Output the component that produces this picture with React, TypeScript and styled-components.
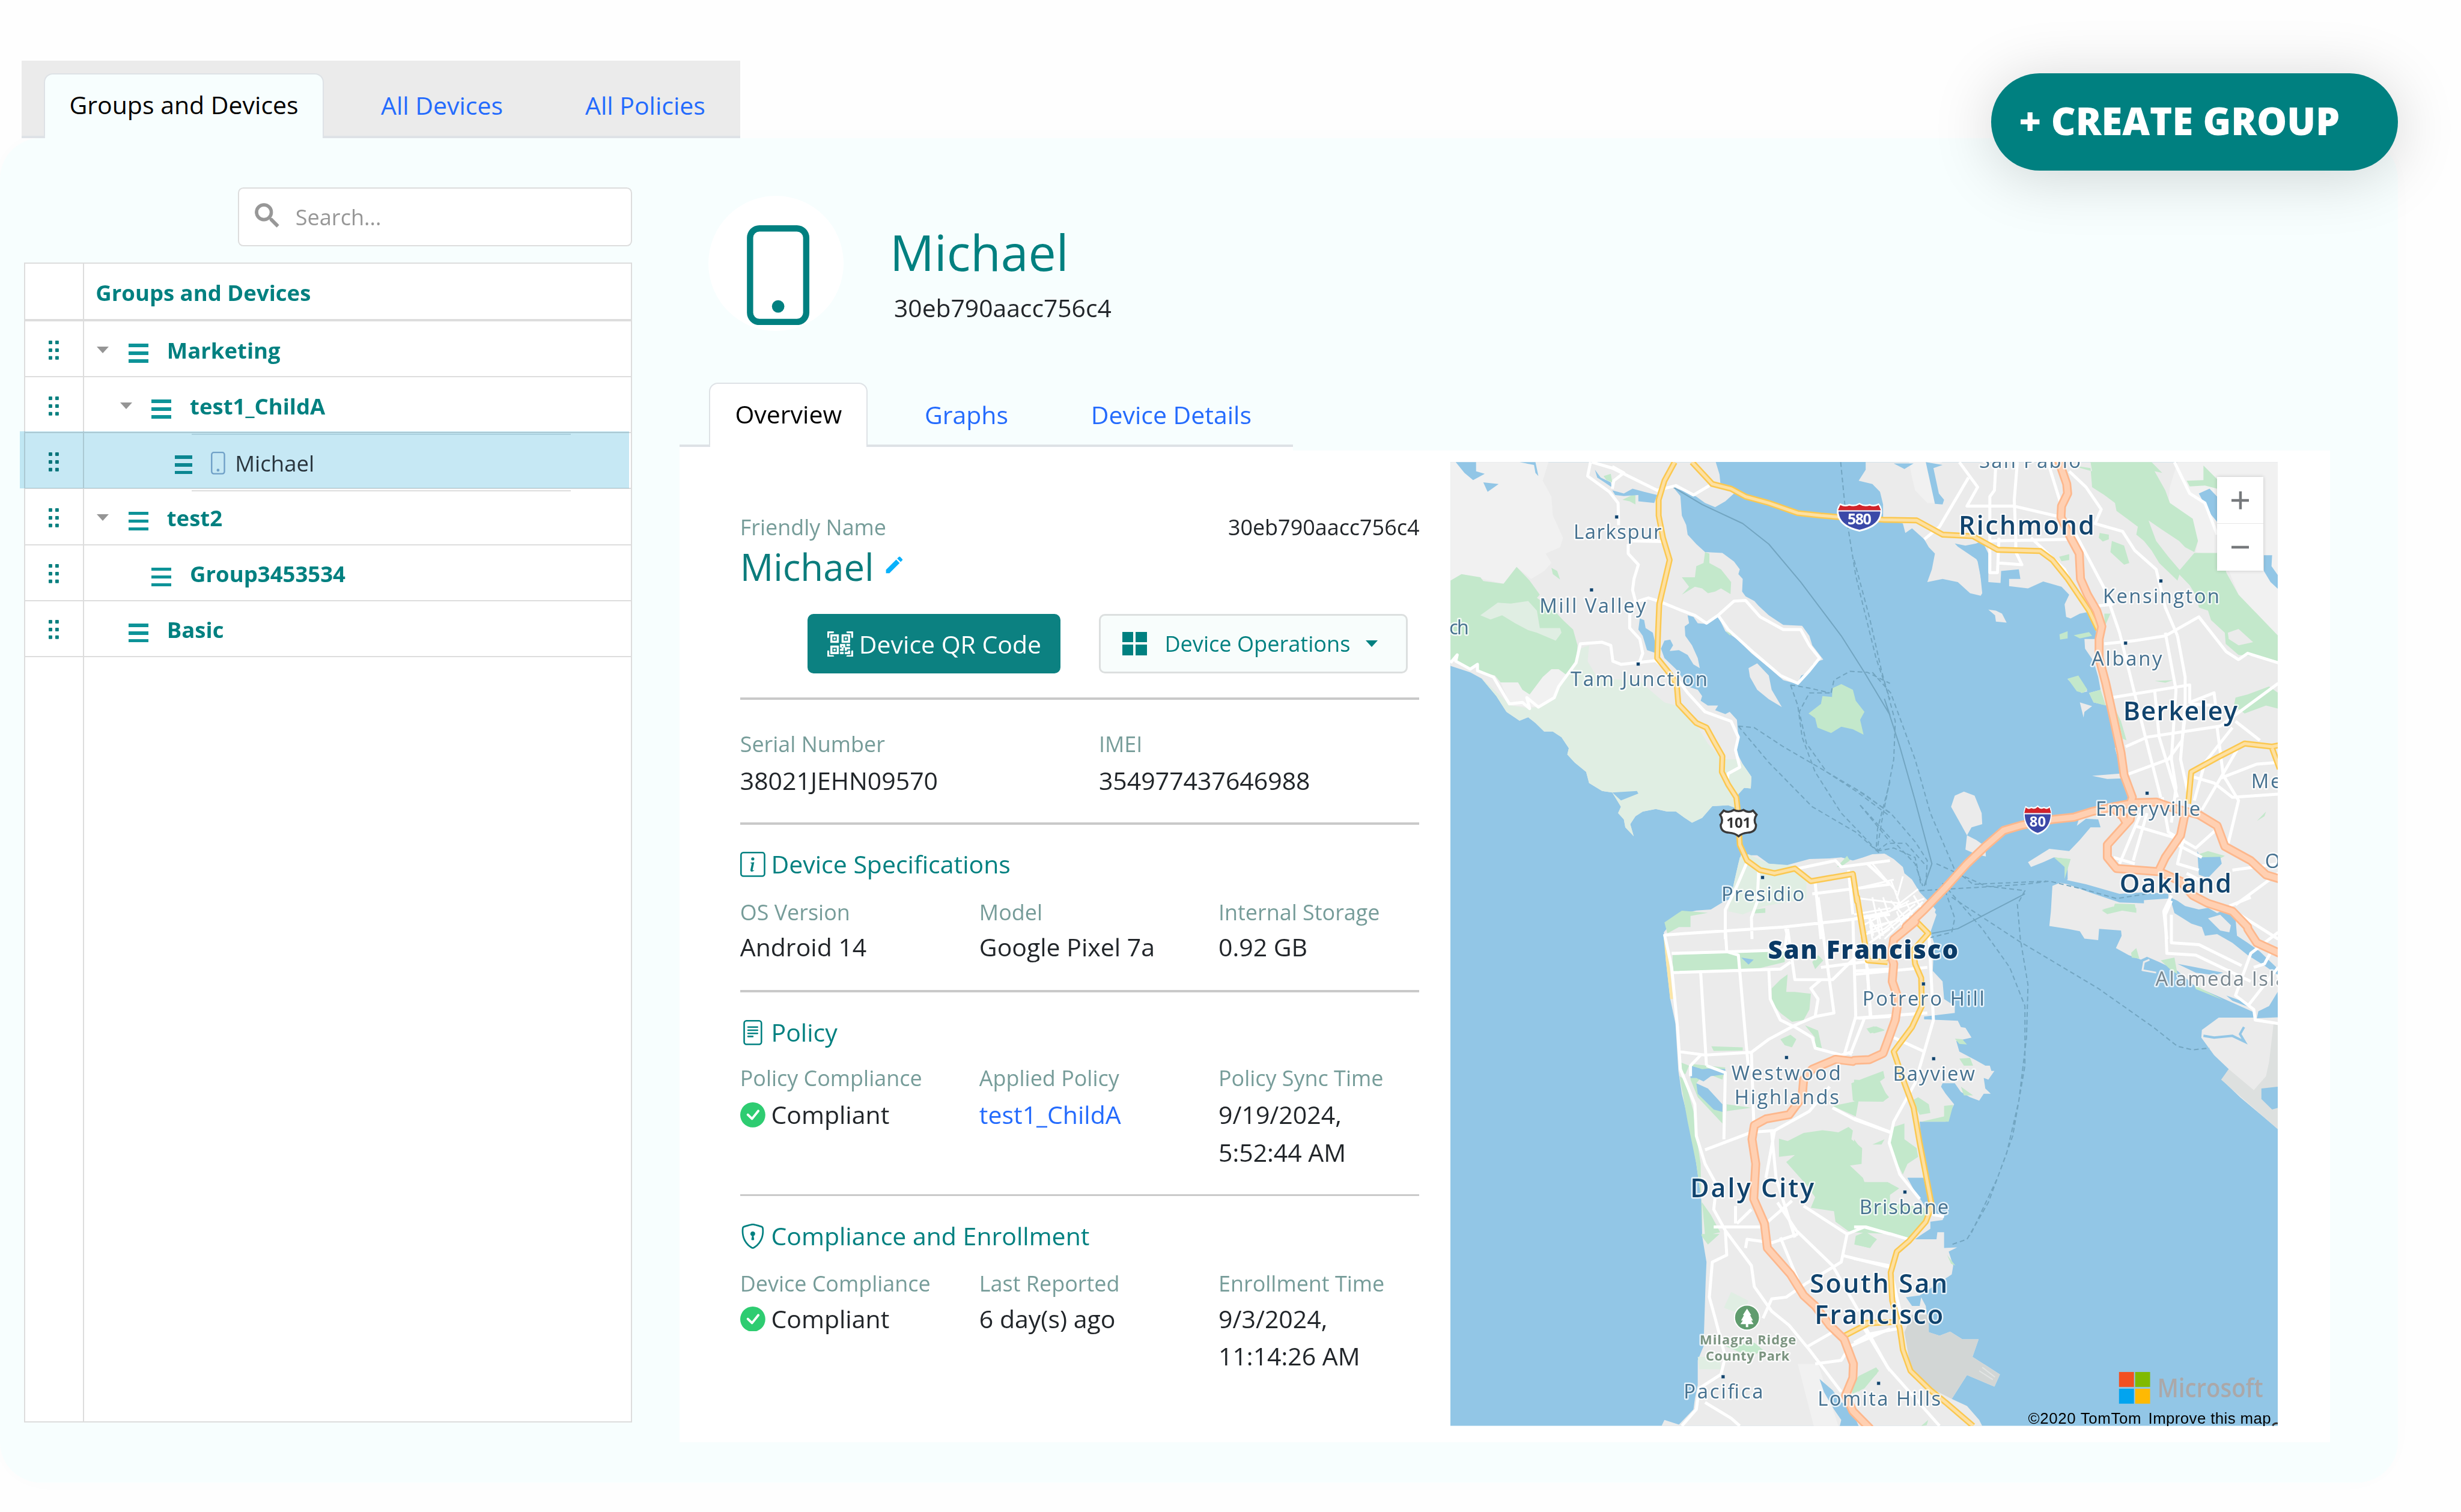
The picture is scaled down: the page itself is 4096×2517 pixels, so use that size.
import React from "react";
import styled, { createGlobalStyle, css } from "styled-components";
import {
  BsPhone,
  BsInfoSquare,
  BsFileText,
  BsShieldLock,
  BsCheckCircleFill,
  BsQrCodeScan,
} from "react-icons/bs";
import { MdSearch, MdEdit } from "react-icons/md";

const teal = "#008080";
const tint = "#f7fefe";
const line = "#dddddd";
const blue = "#246bfd";

const Global = createGlobalStyle`
  html, body { margin: 0; padding: 0; background: #fff; overflow: hidden; }
  * { box-sizing: border-box; }
`;

const Screen = styled.div`
  position: relative;
  width: 4115px;
  height: 2529px;
  zoom: 0.99535;
  overflow: hidden;
  padding-top: 101px;
  background: #fefefe;
  font-family: "Open Sans", "Noto Sans", sans-serif;
  font-size: 41.2px;
  color: #212529;
  white-space: nowrap;
`;

/* ---------- top tabs ---------- */

const TopTabs = styled.nav`
  position: relative;
  z-index: 1;
  display: flex;
  align-items: flex-end;
  width: 1202px;
  height: 130px;
  margin-left: 36px;
  padding-left: 37px;
  background: #ebebeb;
  box-shadow: inset 0 -4px 0 #dee2e6;
`;

const Tab = styled.a<{ $width: number; $height: number; $active?: boolean; $fill?: string }>`
  display: flex;
  justify-content: center;
  width: ${(p) => p.$width}px;
  height: ${(p) => p.$height}px;
  line-height: 102px;
  color: ${(p) => (p.$active ? "#000" : blue)};
  ${(p) =>
    p.$active &&
    css`
      background: ${p.$fill};
      border: 3px solid #dee2e6;
      border-bottom: 0;
      border-radius: 15px 15px 0 0;
    `}
`;

const CreateButton = styled.button`
  position: absolute;
  z-index: 2;
  left: 3329px;
  top: 123px;
  width: 681px;
  height: 162px;
  padding: 0 0 6px 47px;
  border: 0;
  border-radius: 81px;
  background: ${teal};
  color: #fff;
  font: 800 63.5px "Open Sans", sans-serif;
  text-align: left;
  white-space: nowrap;
  box-shadow: 0 10px 100px rgba(0, 0, 0, 0.17);
`;

const Panel = styled.main`
  display: flex;
  width: 4010px;
  height: 2249px;
  border-radius: 68px;
  background: ${tint};
  box-shadow: 0 0 60px rgba(0, 0, 0, 0.012);
`;

/* ---------- group tree ---------- */

const Sidebar = styled.aside`
  width: 1057px;
  padding: 82px 0 0 40px;
  display: flex;
  flex-direction: column;
`;

const SearchBox = styled.label`
  display: flex;
  align-items: center;
  align-self: flex-end;
  width: 659px;
  height: 99px;
  padding-left: 20px;
  gap: 20px;
  border: 3px solid ${line};
  border-radius: 9px;
  background: #fff;
  color: #979797;
  font-size: 36.3px;
  svg {
    margin-top: -3px;
  }
  svg path:last-child {
    stroke: #979797;
    stroke-width: 0.5px;
  }
`;

const SearchText = styled.span`
  padding-top: 1px;
`;

const Grid = styled.section`
  position: relative;
  display: flex;
  flex-direction: column;
  height: 1940px;
  margin-top: 27px;
  border: 3px solid ${line};
  background: #fff;
  font-size: 36.7px;
`;

const GridRow = styled.div<{ $head?: boolean; $fill?: boolean }>`
  display: flex;
  height: ${(p) => (p.$head ? 96.5 : 93.6)}px;
  border-bottom: ${(p) => (p.$head ? 5 : 3)}px solid ${line};
  ${(p) => p.$fill && "flex: 1; border-bottom: 0;"}
`;

const HandleCell = styled.div`
  display: flex;
  align-items: center;
  width: 99px;
  padding: 4px 0 0 36px;
  border-right: 3px solid ${line};
`;

const TreeCell = styled.div<{ $depth: number; $device?: boolean }>`
  display: flex;
  align-items: center;
  padding: ${(p) => (p.$device ? 8 : 4)}px 0 0 ${(p) => 19 + p.$depth * 38.5}px;
  color: ${(p) => (p.$device ? "#343a40" : teal)};
  font-weight: ${(p) => (p.$device ? 400 : 700)};
`;

const Caret = styled.i<{ $on: boolean }>`
  margin: 0 33px 0 2px;
  border: 11px solid transparent;
  border-top: 12px solid ${(p) => (p.$on ? "#959595" : "transparent")};
  border-bottom: 0;
`;

const Bars = styled.i<{ $short?: boolean }>`
  display: flex;
  flex-direction: column;
  gap: 7.5px;
  width: ${(p) => (p.$short ? 29 : 33)}px;
  margin: ${(p) => (p.$short ? 6 : 11)}px ${(p) => (p.$short ? 27 : 31)}px 0 0;
  &::before,
  &::after,
  & > b {
    content: "";
    height: 5.5px;
    background: #0d9398;
  }
`;

const PhoneMark = styled.span`
  display: flex;
  width: 47px;
  margin-left: -2px;
  color: #8fb0d0;
`;

const RowHighlight = styled.div`
  position: absolute;
  left: -9px;
  top: 280px;
  width: 1019px;
  height: 96px;
  background: #c6e8f4;
  mix-blend-mode: multiply;
`;

const DropGuide = styled.div`
  position: absolute;
  left: 278px;
  top: 284px;
  width: 634px;
  height: 97px;
  border-top: 3px solid #dde5e8;
  border-bottom: 3px solid ${line};
`;

/* ---------- device pane ---------- */

const DevicePane = styled.section`
  width: 2760px;
  margin-left: 79px;
  display: flex;
  flex-direction: column;
`;

const DeviceHeader = styled.header`
  display: flex;
  height: 409px;
  padding: 97px 0 0 49px;
`;

const Avatar = styled.div`
  display: flex;
  justify-content: center;
  width: 226px;
  height: 226px;
  padding: 49px 0 0 6px;
  border-radius: 50%;
  background: #fff;
  color: ${teal};
`;

const DeviceTitle = styled.div`
  margin-left: 77px;
  padding-top: 44px;
`;

const TitleName = styled.h1`
  margin: 0;
  font-weight: 400;
  font-size: 82.7px;
  line-height: 100px;
  color: ${teal};
`;

const TitleId = styled.div`
  margin: 13px 0 0 7px;
  font-size: 41px;
  line-height: 60px;
`;

const DeviceTabs = styled.nav`
  display: flex;
  align-items: flex-end;
  width: 1026px;
  height: 108px;
  padding-left: 50px;
  box-shadow: inset 0 -4px 0 #dee2e6;
`;

const Card = styled.div`
  display: flex;
  height: 1664px;
  background: linear-gradient(${tint}, ${tint}) 1026px 0 / 100% 6px no-repeat, #fff;
`;

const Details = styled.div`
  width: 1136px;
  margin-left: 101.5px;
  padding-top: 108px;
`;

const Line = styled.div<{ $gap?: number }>`
  display: flex;
  justify-content: space-between;
  margin-top: ${(p) => p.$gap || 0}px;
`;

const Columns = styled.div<{ $gap?: number; $cols: number }>`
  display: grid;
  grid-template-columns: ${(p) => (p.$cols === 2 ? "600px 1fr" : "400px 400px 1fr")};
  margin-top: ${(p) => p.$gap || 0}px;
`;

const Label = styled.div`
  font-size: 36.1px;
  line-height: 52px;
  color: #769c99;
`;

const SmallId = styled.div`
  font-size: 36.1px;
  line-height: 52px;
`;

const Value = styled.div<{ $link?: boolean }>`
  display: flex;
  gap: 10px;
  line-height: 63px;
  white-space: pre;
  color: ${(p) => (p.$link ? blue : "inherit")};
  svg {
    margin-top: 11px;
  }
`;

const FriendlyName = styled.div`
  display: flex;
  gap: 15px;
  margin-top: 2px;
  font-size: 62px;
  line-height: 76px;
  color: #0b7c7c;
  svg {
    margin-top: 16px;
  }
`;

const Buttons = styled.div`
  display: flex;
  gap: 64px;
  margin: 41px 0 41px 113px;
`;

const QrButton = styled.button`
  display: flex;
  align-items: center;
  gap: 10px;
  width: 423px;
  height: 99px;
  padding: 1px 0 0 33px;
  border: 0;
  border-radius: 10px;
  background: #0c8181;
  color: #fff;
  font: 400 41.2px "Open Sans", sans-serif;
  white-space: nowrap;
  svg {
    stroke: #fff;
    stroke-width: 0.3px;
  }
`;

const OpsButton = styled.button`
  display: flex;
  align-items: center;
  width: 516px;
  height: 99px;
  padding: 0 0 0 36px;
  border: 4px solid #dcdfdf;
  border-radius: 10px;
  background: #f8fdfc;
  color: ${teal};
  font: 400 36.3px "Open Sans", sans-serif;
  white-space: nowrap;
`;

const Tiles = styled.span`
  display: grid;
  grid-template-columns: 18.5px 18.5px;
  gap: 4px;
  margin-right: 30px;
  i {
    height: 17.5px;
    background: ${teal};
  }
`;

const OpsCaret = styled.i`
  margin: 0 0 0 26px;
  border: 10.5px solid transparent;
  border-top: 12px solid ${teal};
  border-bottom: 0;
`;

const Rule = styled.hr`
  height: 4px;
  margin: 0;
  border: 0;
  background: #c9c9c9;
`;

const SectionHead = styled.h2<{ $gap: number }>`
  display: flex;
  gap: 10px;
  margin: ${(p) => p.$gap}px 0 0;
  font-weight: 400;
  font-size: 41.2px;
  line-height: 63px;
  color: ${teal};
  svg {
    margin-top: 11px;
  }
`;

const Space = styled.div<{ $h: number }>`
  height: ${(p) => p.$h}px;
`;

/* ---------- map ---------- */

const MapBox = styled.div`
  position: relative;
  width: 1384px;
  height: 1612px;
  margin: 25px 0 0 51.5px;
  svg {
    display: block;
  }
`;

const ZoomBox = styled.div`
  position: absolute;
  left: 1282px;
  top: 25px;
  width: 78px;
  height: 156px;
  display: flex;
  flex-direction: column;
  background: #fff;
  box-shadow: 0 0 6px rgba(0, 0, 0, 0.18);
`;

const ZoomButton = styled.button`
  display: flex;
  align-items: center;
  justify-content: center;
  flex: 1;
  padding: 0;
  border: 0;
  background: none;
  & + & {
    border-top: 2px solid #e8e8e8;
  }
`;

/* Map geometry is stored per tile; each tile has its own origin and unit size. */
const tiles: Record<string, number[]> = {
  NW: [2400, 740, 0.48469, 0.52934],
  NE: [3100, 740, 0.5102, 0.52934],
  SW: [2400, 1500, 0.48469, 0.58673],
  SE: [3100, 1500, 0.5102, 0.58673],
};

const trace = (s: string) => {
  let t = tiles.NW;
  let d = "";
  let cmd = "M";
  for (const tok of s.trim().split(/\s+/)) {
    if (tiles[tok]) t = tiles[tok];
    else if (tok === "/") cmd = "M";
    else {
      const [x, y] = tok.split(",").map(Number);
      d += cmd + (t[0] + x * t[2]).toFixed(1) + " " + (t[1] + y * t[3]).toFixed(1);
      cmd = "L";
    }
  }
  return d;
};

const land = [
  `NW 52,61 967,61 980,100 983,128 1030,160 1000,185 965,203 930,190 900,170 870,158 820,140 845,168 850,230 865,260 870,290 900,320 930,345 990,348 1030,375 1050,400 1045,415 1060,430 1058,470 1070,485 1100,500 1115,515 1150,545 1200,575 1265,578 1290,610 1300,640 1338,685 1320,690 1300,700 1290,725 1262,735 1248,762 1200,750 1150,710 1090,665 1040,620 1000,595 975,548 930,572 905,570 890,550 870,545 875,570 860,580 862,610 885,640 905,680 912,712 890,700 870,670 840,655 808,658 820,640 810,622 790,625 778,650 790,680 830,715 850,740 870,770 905,780 920,800 915,815 940,830 975,830 965,845 1000,857 1015,850 1040,875 1045,930 1035,970 1060,1015 1090,1055 1088,1092 1065,1090 1045,1110 1040,1155 1010,1145 955,1148 920,1185 885,1200 860,1185 830,1165 800,1165 760,1157 715,1165 690,1180 672,1205 684,1243 655,1215 650,1190 630,1170 640,1150 610,1105 575,1100 530,1075 520,1040 480,1010 455,985 460,965 435,930 405,912 375,912 345,885 320,867 290,878 245,850 210,800 160,745 120,725 52,705`,
  `NW 1110,697 1150,735 1160,780 1195,835 1150,810 1110,780 1085,740 1080,712`,
  `NE 38,61 38,85 15,120 60,130 85,155 95,195 95,240 160,255 168,285 190,270 230,305 245,330 265,350 255,400 240,440 290,430 340,440 380,475 415,483 420,475 412,400 405,370 340,328 330,318 365,325 400,318 420,310 440,350 440,440 480,443 482,405 540,400 545,430 508,430 508,453 570,460 620,438 680,455 705,480 690,510 695,550 710,555 740,540 765,535 790,560 795,620 755,620 757,650 785,690 800,740 808,780 770,790 785,820 830,830 850,900 865,950 855,965 865,1000 872,1045 780,1052 830,1062 878,1060 890,1100 900,1130 830,1140 790,1150 740,1180 730,1210 760,1188 800,1190 808,1215 775,1215 740,1255 705,1290 640,1283 570,1325 580,1340 620,1325 655,1310 700,1315 700,1380 650,1400 645,1480 SE 640,82 700,90 740,97 755,118 800,122 803,90 875,95 877,110 858,145 900,165 940,178 960,170 1000,185 1060,210 1120,255 1200,285 1290,320 1315,330 1310,343 1195,343 1140,378 1138,400 1180,450 1228,490 1205,520 1265,570 1340,625 1390,662 NE 1390,61`,
  `NE 330,1115 360,1102 395,1115 418,1170 420,1205 385,1215 370,1240 400,1255 430,1275 432,1307 400,1300 365,1285 370,1240 318,1150`,
  `NE 440,527 465,530 485,540 500,568 465,565 462,545 / 698,745 760,780 765,785 745,790 / 740,820 780,832 755,850 752,868`,
  `NW 1055,1300 1080,1303 1110,1303 1150,1330 1210,1335 1290,1315 1360,1313 1400,1310 1440,1320 1500,1303 1560,1300 NE 30,1310 60,1300 100,1298 130,1315 160,1340 165,1360 190,1380 215,1420 250,1455 268,1475 255,1510 SE 255,30 270,50 250,100 262,130 258,210 290,240 295,290 330,310 330,330 230,340 230,348 340,352 350,370 365,372 385,400 335,410 345,440 400,465 430,480 445,480 450,495 460,495 440,520 425,515 430,545 448,560 425,560 410,580 380,570 350,555 330,530 290,530 285,540 300,560 328,590 300,640 215,640 220,700 240,800 175,800 200,840 255,905 295,910 290,920 250,925 250,945 215,965 200,975 270,975 273,955 295,955 295,1000 338,998 310,1010 325,1050 320,1075 250,1115 215,1135 170,1140 190,1165 215,1165 220,1140 235,1165 245,1240 280,1250 315,1238 355,1260 408,1260 388,1310 478,1360 460,1395 370,1362 320,1430 370,1450 410,1490 420,1507 SW 780,1507 790,1490 840,1503 890,1460 895,1430 905,1390 905,1320 925,1280 932,1100 935,1040 920,965 920,880 900,760 880,660 850,560 838,495 828,360 810,290 795,180 788,100 835,50 900,38 950,35 990,15 NW 1020,1440 1030,1390 1045,1330`,
];

const lightLand = [
  `NW 52,61 390,61 370,120 400,170 405,230 440,300 430,330 380,350 400,380 375,405 330,430 280,392 235,445 90,415 52,435`,
  `NW 225,757 285,757 325,795 370,740 400,715 425,715 455,730 440,745 410,805 355,835 260,830`,
  `NE 180,61 290,61 240,80 270,190 240,190 200,150 190,110`,
  `NE 1060,61 1390,61 1390,620 1330,560 1260,480 1210,360 1120,345 1127,310 1100,235 1030,190 1035,140`,
  `SW 1250,1330 1320,1330 1390,1507 1305,1507`,
];

const paleGreen = [
  `NW 155,740 225,800 260,830 320,838 355,835 410,805 450,740 490,690 500,650 530,640 525,690 560,745 700,750 790,820 830,830 900,890 940,950 990,1000 1040,1000 1060,1015 1090,1055 1088,1092 1065,1090 1045,1110 1040,1155 1010,1145 955,1148 920,1185 885,1200 860,1185 830,1165 800,1165 760,1157 715,1165 690,1180 672,1205 684,1243 655,1215 650,1190 630,1170 640,1150 610,1105 575,1100 530,1075 520,1040 480,1010 455,985 460,965 435,930 405,912 375,912 345,885 320,867 290,878 245,850 210,800`,
  `NW 1050,1310 1080,1300 1150,1330 1230,1335 1280,1360 1280,1440 1130,1465 1060,1490 1010,1480 1030,1390`,
  `SW 1020,1125 1080,1150 1060,1190 995,1170 / 905,1310 980,1310 985,1345 910,1345`,
];

const green = [
  `NW 52,435 90,415 155,425 165,437 235,445 280,392 325,435 360,480 350,490 400,520 440,560 475,590 490,640 485,700 455,735 425,715 400,715 370,740 325,795 300,780 285,757 225,757 205,735 150,725 145,700 120,715 75,690 52,685`,
  `NW 850,425 895,425 900,390 925,380 930,345 945,350 945,380 985,400 1020,440 1018,478 985,460 965,470 940,475 920,460 895,455 850,480 875,455`,
  `NW 1287,855 1330,825 1335,800 1368,803 1370,775 1400,762 1440,780 1450,815 1480,850 1465,875 1477,922 1440,905 1400,897 1365,917 1318,900 1310,870`,
  `NW 400,395 420,405 430,432 405,415 / 645,180 690,160 690,195 670,185 / 580,105 605,98 610,125 590,118 / 1000,595 1030,605 1015,608`,
  `NW 790,1515 850,1478 940,1485 880,1495 880,1530 840,1530 800,1550`,
  `NW 1385,1340 1420,1305 1430,1320 1400,1338 / 1100,1475 1138,1470 1138,1485 1100,1487`,
  `NE 705,70 780,90 775,61 975,61 1010,95 985,90 1020,150 1035,190 1110,240 1127,310 1115,345 1085,330 1065,310 1010,275 965,245 990,310 1030,360 1070,405 1060,435 1000,380 975,340 950,310 925,290 930,265 895,240 860,215 855,190 820,165 780,140 775,80`,
  `NE 1115,348 1205,348 1220,410 1260,480 1320,540 1390,610 1390,690 1330,675 1260,670 1218,635 1215,600 1170,560 1160,530 1130,520 1125,490 1100,450 1060,410`,
  `NE 1090,120 1145,118 1145,72 1190,115 1190,145 1150,135 1100,138 / 805,285 835,290 835,305 815,312 802,300 / 845,310 885,325 902,380 885,385 840,345 / 672,360 705,352 705,370 680,374`,
  `NE 1245,830 1250,805 1290,795 1360,770 1390,790 1390,840 1350,830 1280,855 / 700,745 735,735 765,780 750,790 730,785 / 770,790 808,780 825,830 785,820 / 673,605 700,595 700,618 675,622 / 720,608 770,598 780,610 740,618`,
  `NE 860,850 875,880 893,940 880,935 / 820,540 840,540 822,580 / 985,752 1045,750 1020,758 / 1320,1195 1350,1165 1345,1180 / 655,1310 710,1315 690,1378 690,1340 / 1130,1300 1160,1290 1215,1305 1170,1330 1130,1325 / 812,1475 850,1465 855,1480 / 870,1465 925,1470 925,1485 880,1478`,
  `SW 818,165 1205,152 1205,185 1120,202 818,212`,
  `SW 1160,260 1190,235 1215,220 1210,270 1240,270 1295,275 1290,320 1270,350 1230,355 1190,330 1160,300`,
  `SW 952,425 1060,428 1060,437 960,438 / 1190,405 1225,392 1245,405 1230,428 1205,422 / 1275,365 1320,380 1333,430 1305,432 1310,400 / 1300,185 1320,165 1338,180 1310,205`,
  `SW 842,510 860,520 890,610 900,680 915,760 918,960 980,960 940,990 918,965 920,880 900,760 870,640 / 920,870 950,905 982,955 930,965 / 845,470 875,480 862,505 845,495`,
  `SW 880,475 1000,485 990,520 930,500 900,530 990,590 990,645 905,570 880,520 / 1005,590 1090,600 1005,610`,
  `SW 1210,755 1240,735 1185,740 1185,688 1215,695 1270,672 1335,664 1390,670 1425,655 1440,665 1435,690 1472,715 1470,760 1430,765 1475,800 1480,812 1568,815 1568,960 1430,955 1380,925 1375,895 1295,885 1310,855 1280,820`,
  `SW 1435,530 1480,515 1545,495 1550,515 1525,530 1565,570 1545,582 1440,580 / 1370,595 1460,580 1450,625 / 1450,965 1480,955 1520,975 1500,1000 1445,990 / 1430,1400 1460,1365 1520,1340 1530,1350 1480,1400 1440,1415 / 1490,378 1520,368 1550,378 1500,388 / 1000,1280 1100,1270 1130,1290 1090,1310`,
  `SE 0,520 85,525 110,570 95,583 0,582 / 0,690 25,720 15,755 0,755 / 30,812 110,812 148,830 115,850 110,870 230,885 240,920 180,972 120,955 0,935 0,860 30,860 / 40,375 65,368 100,380 65,388 / 10,965 40,955 75,975 50,1000 5,990`,
  `SE 190,580 210,570 245,590 250,615 215,620 / 130,655 165,645 165,690 205,715 210,740 175,760 160,790 130,740 115,700 / 295,595 325,592 310,640 220,640 295,625 / 345,460 380,458 390,480 360,480 / 330,403 355,405 370,420 345,418 / 350,540 390,565 360,565 / 60,705 100,690 90,705`,
  `SE 1005,180 1050,172 1060,220 1035,205 / 908,158 925,145 935,175 910,172 / 812,38 850,30 855,18 920,20 925,40 880,38 830,48 / 1115,250 1210,293 1120,262 / 305,1020 332,1050 318,1045 / 0,1385 30,1370 75,1342 75,1358 15,1410 / 220,1507 243,1490 238,1505`,
];

const water = [
  `NW 70,61 140,61 140,90 170,98 130,118 100,95 / 165,125 218,130 180,155 / 290,61 345,61 355,105 345,95 340,70 / 550,85 570,110 605,125 608,140 575,120 558,110 / 610,150 650,160 680,145 720,155 765,165 755,190 700,185 700,165 650,168 620,165 / 610,1105 695,1100 700,1108 640,1130 / 705,555 720,560 725,585 750,600 760,640 762,665 730,655 715,610 700,590`,
  `NE 235,61 290,70 260,80 278,160 295,180 290,195 265,193 / 130,65 195,65 165,83 / 1130,160 1165,145 1190,170 1190,250 1160,215 / 1343,355 1370,355 1368,390 1390,420 1390,462 1365,440 1343,405 / 380,330 412,340 420,370 430,400 435,450 420,450 405,375`,
  `NE 1125,1290 1135,1310 1200,1308 1205,1330 1160,1375 1130,1365 / 1140,1325 1190,1340 1150,1370`,
  `SE 1035,0 1060,10 1085,25 1130,35 1160,30 1190,45 1215,35 1250,60 1255,110 1290,130 1330,155 1360,180 1390,205 1390,222 1345,195 1290,165 1240,130 1190,105 1150,110 1140,85 1105,75 1050,45 / 1060,190 1120,200 1210,215 1180,222 1120,215 / 1220,280 1300,305 1290,312 1240,295 / 1335,545 1390,540 1390,600 1370,605 1335,575 / 1325,325 1360,310 1388,270 1390,342 1320,345`,
  `NE 690,1380 760,1395 870,1425 950,1420 1030,1425 1030,1440 950,1445 950,1455 870,1452 770,1420 700,1395 650,1385`,
  `SW 1325,1373 1370,1405 1400,1440 1430,1450 1460,1507 1395,1507 1400,1490 1375,1460 1340,1410 / 880,480 920,490 950,488 1000,490 1000,505 950,510 925,525 900,515 880,515 / 900,530 940,545 990,590 990,612 960,605 905,560 / 1055,172 1098,178 1080,192`,
  `SE 175,800 230,800 255,900 235,885 / 230,340 335,335 340,350 230,348`,
];

const gray = [
  `SE 245,1190 245,1240 280,1250 315,1238 355,1260 408,1260 388,1310 478,1360 460,1395 370,1362 320,1430 230,1390 185,1340 165,1240 190,1190`,
];
const grayLight = [
  `SE 1228,490 1310,550 1350,510 1360,470 1375,360 1390,360 1390,662 1203,520`,
];

const streets = [
  `NW 535,61 525,105 600,155 630,190 632,260 / 540,61 610,80 765,150 830,135 890,165 945,135 / 610,75 650,95 615,120 610,145`,
  `NW 665,320 665,350 700,385 685,430 680,465 690,500 670,545 670,585 705,620 715,665 705,690 / 680,310 790,312 / 700,500 735,490 770,500 850,530 895,545 935,570 975,545 1030,500 1070,498 1120,550 1200,590 1260,590 1290,640 1325,680 1290,720 1250,760 1190,735 1100,665 1010,590 975,545`,
  `NW 52,695 75,670 70,690 120,715 145,700 145,720 200,740 255,825 300,820 325,840 315,805 355,835 410,805 425,770 485,695 500,635 575,630 605,640 612,690 640,700 760,688 800,720`,
  `NW 830,740 870,790 930,850 1020,880 1045,930 1035,970 1050,1025 1010,1045 1005,1075`,
  `NW 1075,1325 1040,1400 1000,1475 1000,1568 / 1115,1355 1110,1450 1090,1500 1092,1568 / 790,1555 900,1548 1200,1530 1400,1510 1568,1490 / 1310,1390 1330,1568 / 1300,1425 1568,1395 / 1250,1345 1380,1320 1400,1340 1568,1320 / 1425,1350 1440,1490 / 1490,1330 1568,1395 / 1208,1535 1218,1568`,
  `NE 345,61 405,140 370,200 525,200 / 375,110 280,265 230,305 / 465,61 460,150 445,170 445,410 470,410 475,300 / 535,61 525,180 530,300 530,345 550,385 475,380 / 525,200 680,235 / 440,310 710,305 / 580,300 690,400 710,440 / 635,61 680,200 / 705,90 760,140 810,210 790,255 880,280 920,340 990,400 1020,520 1060,610 / 700,240 820,460 870,600 960,950 1005,1120 / 800,515 850,510 / 1050,61 1100,160 1150,190 1190,290`,
  `NE 820,635 920,625 1020,610 1130,550 1220,660 1260,685 1290,665 1390,695 / 1020,600 1055,780 1040,1000 1055,1090 1040,1200 / 1060,610 1085,740 1085,830 1070,1000 1100,1130 / 845,805 1100,765 1100,820 1180,790 1185,830 1100,825 / 890,960 960,930 1200,895 1390,760 / 890,1050 1030,1000 1075,940 1090,830 / 985,780 1000,930 1060,1120 / 1190,900 1210,1050 1260,1130 1225,1270 / 1250,880 1330,940`,
  `NE 1110,1055 1180,1075 1240,1120 1390,1110 / 1240,900 1150,1010 1115,1130 / 1255,970 1140,1160 / 1390,1010 1320,1015 1200,1060 / 940,1170 870,1330 / 850,1310 920,1330 / 920,1210 1060,1250 / 960,1170 915,1320 / 1010,1120 1030,1230 1120,1280 1190,1220 / 1060,1270 1140,1310 / 1080,1250 1060,1330 1130,1350 / 1040,1430 1015,1480 1025,1568 / 1240,1350 1390,1330 / 1250,1460 1390,1360 / 1230,1470 1390,1568 / 1130,1380 1090,1360`,
  `SW 790,105 815,200 835,370 845,490 895,590 900,680 930,760 970,820 960,890 1000,950 1005,1020 955,1040 945,1140 965,1200 1000,1310 985,1360 910,1400 900,1460 850,1507 / 815,160 1040,155 1205,150 1215,90 / 815,215 1190,205 1225,185 / 1000,90 1005,155 1045,165 1070,400 1080,490 / 915,215 935,480 / 840,440 930,450 1090,442 1150,405 1240,365 1310,340 / 880,510 880,480 915,450 / 935,480 1000,500 995,690`,
  `SW 930,720 1090,670 1170,665 1290,610 1360,540 / 1090,442 1098,640 / 1150,205 1155,290 1190,350 1240,370 1300,400 1310,430 1400,450 1440,440 / 1215,90 1240,235 1370,235 1450,170 / 1320,0 1375,330 1310,340 1320,290 1295,260 1330,235 / 1330,200 1568,175 / 1440,60 1450,340 1410,450 / 1450,210 1568,205 / 1490,200 1500,340 / 1460,345 1568,340 / 1480,345 1430,450`,
  `SW 1370,600 1450,635 1568,670 / 1170,665 1140,800 / 1160,670 1175,800 1240,970 / 960,940 1120,940 / 1000,950 1090,1050 1100,1110 1160,1180 1220,1220 1290,1290 1400,1410 / 1070,1000 1075,975 1160,985 1250,960 / 1180,870 1245,950 1370,1050 1460,1180 / 1140,930 1230,865 / 1190,970 1250,1090 / 1040,930 1090,890 / 1035,880 1035,930 / 1270,880 1420,960 1400,1040 1280,1100 1210,1140 1160,1145 1130,1200 / 1400,1020 1568,1055 / 1420,960 1480,940 1568,960 / 1285,1280 1370,1240 / 1310,1330 1400,1320 1430,1280 1568,1230 / 1480,1230 1568,1350 / 930,1440 1020,1485 1050,1507`,
  `SE 0,220 240,200 / 40,180 55,340 / 245,100 260,350 200,530 130,640 115,700 150,790 215,860 / 0,345 240,330 / 130,400 230,440 / 0,630 120,670 / 0,1030 115,1050 / 120,1060 140,1140 160,1210 / 0,1270 50,1245 140,1230 / 40,1230 110,1340 280,1507 / 0,940 40,940 180,975 / 225,770 260,905 295,910`,
  `SE 1040,10 1020,50 1025,160 1120,165 1300,240 / 1040,50 1040,130 1130,135 1270,195 / 1390,100 1300,160 1250,280 1310,320 1315,350 1390,360 / 1390,200 1295,305 / 1230,25 1300,0 / 1310,200 1345,190 1370,150`,
];

const blocks = [
  `NE 20,1480 35,1568 / 50,1500 60,1568 / 75,1490 85,1568 / 0,1490 120,1470 / 130,1470 210,1410 / 60,1500 230,1440 / 50,1530 180,1500 / 100,1568 225,1450 / 140,1480 160,1530 / 170,1450 195,1500 / 195,1430 220,1470 / 20,1440 150,1455 / 120,1380 155,1470 / 0,1410 130,1380 / 60,1330 140,1420 / 160,1370 140,1440`,
  `SE 0,60 120,40 / 20,110 100,90 200,20 / 50,130 220,20 / 30,80 180,10 / 90,110 40,50 / 130,90 80,30 / 170,60 120,10 / 60,0 75,60 / 95,0 110,40`,
  `SW 1480,60 1568,50 / 1500,60 1510,110 / 1530,55 1545,110 / 1490,100 1568,70 / 1500,130 1568,90`,
];

const yellow = [
  `NW 825,61 790,120 770,180 770,230 785,300 808,370 790,440 772,510 768,600 765,680 800,720 832,760 838,825 900,885 935,900 965,950 990,990 988,1040 1010,1080 1038,1120 1043,1160 1050,1270 1075,1320 1120,1350 1170,1360 1240,1345 1295,1385 1440,1362 1455,1450 SE 10,0 35,130 45,180 110,185`,
  `NW 885,61 955,130 1020,145 1070,170 1150,190 1250,222 1330,230 1400,235 NE 95,243 205,245 290,290 390,295 470,338 610,342 650,370 700,430 770,530 800,590`,
  `SE 200,65 243,103 195,150 200,190 220,230 222,310 190,370 130,440 165,530 195,600 215,700 235,790 255,880 235,925 180,980 140,1010 120,1070 125,1150 150,1230 160,1290 185,1350 250,1405 300,1440 390,1507`,
  `NE 1095,1140 1105,1040 1190,995 1280,950 1370,960 1395,955 / 1370,965 1395,1030`,
  `SW 1400,1255 1500,1212 SE 30,1215 150,1210`,
];

const orange = [
  `NE 670,55 697,130 700,160 680,200 678,235 710,300 738,350 742,430 765,480 795,530 812,580 803,620 803,680 825,760 850,870 875,980 885,1050 912,1120 905,1140 850,1150 780,1165 720,1183 650,1190 550,1208 490,1225 430,1275 370,1330 300,1405 230,1475 170,1530 SE 200,70 130,120 122,170 130,190 125,240 145,290 135,350 110,410 95,445 50,463 0,465 SW 1440,468 1380,462 1300,490 1270,520 1265,570 1220,620 1140,632 1100,650 1092,690 1105,760 1098,860 1135,930 1145,1000 1225,1075 1270,1135 1310,1165 1360,1220 1410,1260 1442,1330 1440,1370 1415,1420 1440,1465 1500,1515`,
  `NE 915,1135 905,1190 830,1270 830,1310 860,1345 930,1350 1000,1355 1070,1385 1110,1430 1160,1455 1240,1480 1290,1530 SE 1290,90 1320,130 1395,160`,
  `NE 900,1138 990,1135 1050,1155 1130,1175 1190,1210 1215,1275 1300,1320 1350,1365 1395,1378`,
  `NE 1085,1170 1070,1240 1020,1310 1000,1350 / 850,1155 880,1180 895,1205`,
];

const ferrySolid = [
  `NW 820,140 920,195 1060,255 1150,320 1260,440 1400,610 1480,725 1568,860 NE 100,810 150,960 200,1130 255,1330 230,1400 / 255,1550 340,1535 430,1490 560,1425`,
];
const ferryDashed = [
  `NW 1398,61 1415,220 1450,420 1520,680 1568,810 / 1365,790 1375,750 1430,722 1490,725 1568,760 / 1225,765 1290,775 1360,790 / 1225,765 1250,830 1265,930 1310,1040 1400,1170 1530,1295 / 1360,790 1290,790 1255,850 1280,950 1350,1040 1450,1100 1568,1180 / 1045,895 1100,900 1200,960 1350,1040 1480,1110 1568,1170 / 1045,895 1150,1010 1300,1150 1450,1230 1530,1295 / 1465,1145 1568,1260 / 1568,1070 1525,1220 1520,1290`,
  `NE 0,370 50,550 90,720 135,880 130,1000 90,1200 75,1290 / 60,725 120,790 200,1000 250,1170 330,1350 390,1395 630,1385 / 0,1090 120,1170 200,1260 240,1320 235,1400 / 75,1290 110,1265 170,1265 230,1330 / 20,1145 120,1250 200,1330 225,1400 / 215,1415 400,1405 560,1395 640,1385 750,1410 860,1440 960,1425 / 75,1290 130,1280 200,1310 220,1400`,
  `NE 270,1330 430,1400 560,1415 540,1450 SE 535,20 545,120 570,250 565,400 540,580 500,730 440,870 370,975 320,990 / 290,-40 420,90 510,200 560,310 560,480 520,680 470,800 380,965 / 320,0 540,125 800,260 980,370 1060,425 1110,435 1165,430 / 290,-40 330,60 320,100 250,115`,
];

const Area = ({ list, fill }: { list: string[]; fill: string }) => (
  <g fill={fill}>
    {list.map((s, i) => (
      <path key={i} d={trace(s)} />
    ))}
  </g>
);

const Road = ({ list, color, width, dash }: { list: string[]; color: string; width: number; dash?: string }) => (
  <g fill="none" stroke={color} strokeWidth={width} strokeLinejoin="round" strokeDasharray={dash}>
    {list.map((s, i) => (
      <path key={i} d={trace(s)} />
    ))}
  </g>
);

type Place = [string, number, number, number, number, number, string];
const town = "#44708f";
const city = "#10436d";
const places: Place[] = [
  ["Larkspur", 2631, 901, 147, 33, 500, town],
  ["Mill Valley", 2574, 1024, 178, 33, 500, town],
  ["ch", 2423, 1060, 33, 33, 500, town],
  ["Tam Junction", 2626, 1147, 229, 33, 500, town],
  ["Presidio", 2878, 1506, 139, 33, 500, town],
  ["San Pablo", 3309, 782, 170, 33, 500, town],
  ["Richmond", 3275, 894, 227, 43, 600, city],
  ["Kensington", 3516, 1008, 195, 33, 500, town],
  ["Albany", 3497, 1113, 118, 33, 500, town],
  ["Berkeley", 3550, 1204, 191, 43, 600, city],
  ["Me", 3764, 1318, 51, 33, 500, town],
  ["Emeryville", 3504, 1364, 175, 33, 500, town],
  ["O", 3787, 1451, 28, 33, 500, town],
  ["Oakland", 3544, 1492, 187, 43, 600, city],
  ["San Francisco", 2956, 1603, 318, 42, 800, "#0a3a66"],
  ["Potrero Hill", 3114, 1681, 204, 33, 500, town],
  ["Westwood", 2895, 1806, 183, 33, 500, town],
  ["Highlands", 2900, 1846, 175, 33, 500, town],
  ["Bayview", 3165, 1807, 137, 33, 500, town],
  ["Daly City", 2826, 2002, 207, 43, 600, city],
  ["Brisbane", 3109, 2030, 149, 33, 500, town],
  ["South San", 3026, 2161, 230, 43, 600, city],
  ["Francisco", 3034, 2214, 215, 43, 600, city],
  ["Milagra Ridge", 2842, 2248, 161, 22, 700, "#7b9480"],
  ["County Park", 2852, 2275, 140, 22, 700, "#7b9480"],
  ["Pacifica", 2815, 2338, 133, 33, 500, town],
  ["Lomita Hills", 3039, 2350, 206, 33, 500, town],
  ["Alameda Island", 3604, 1648, 264, 33, 500, "#78868f"],
];

const dots = [
  [2703, 864], [2661, 986], [2739, 1110], [2947, 1467], [3613, 971], [3554, 1075], [3590, 1326],
  [3216, 1645], [2987, 1768], [3233, 1770], [3185, 1993], [2881, 2302], [3141, 2313],
];

const Interstate = ({ x, y, w, h }: { x: number; y: number; w: number; h: number }) => (
  <svg x={x} y={y} width={w} height={h} viewBox="0 0 74 45" preserveAspectRatio="none" overflow="visible">
    <path
      d="M5 1Q12 5 20 2Q29 5 37 0Q45 5 54 2Q62 5 69 1Q76 9 72 21Q66 39 37 45Q8 39 2 21Q-2 9 5 1Z"
      fill="#3b49a8"
      stroke="#fff"
      strokeWidth="3"
    />
    <path d="M5 2Q12 6 20 3Q29 6 37 1Q45 6 54 3Q62 6 69 2L73 11H1Z" fill="#d2232a" />
    <path d="M1 12H73" stroke="#fff" strokeWidth="2" />
  </svg>
);

const MapView = () => (
  <svg width="1384" height="1612" viewBox="2425 772 1384 1612" fontFamily='"Open Sans", "Noto Sans", sans-serif'>
    <rect x="2425" y="772" width="1384" height="1612" fill="#92c6e6" />
    <Area list={land} fill="#ebebeb" />
    <Area list={lightLand} fill="#f1f1f1" />
    <Area list={paleGreen} fill="#e0eee3" />
    <Area list={green} fill="#c3e8cb" />
    <path
      d={trace(
        "NW 155,545 215,505 260,508 320,500 350,530 360,585 430,585 435,600 415,625 350,600 320,592 275,570 230,545 190,558"
      )}
      fill="#e0eee3"
    />
    <path d={trace("NE 1225,600 1260,588 1308,630 1260,640 1228,620")} fill="#ebebeb" />
    <Area list={gray} fill="#d2d6d5" />
    <Area list={grayLight} fill="#dde0df" />
    <Area list={water} fill="#92c6e6" />
    <path d={trace("SE 1160,60 1200,50 1235,80 1230,100 1200,95")} fill="#ebebeb" />
    <path d={trace("SE 1145,395 1180,400 1240,395 1280,412 1265,390 1278,370")} fill="none" stroke="#92c6e6" strokeWidth="4" />
    <path d={trace("SE 945,210 950,185 968,178 / 945,208 990,215")} fill="none" stroke="#ebebeb" strokeWidth="3" />
    <path d={trace("SE 410,1350 455,1375 / 420,1340 462,1368")} fill="none" stroke="#e2e5e4" strokeWidth="2" />
    <path d={trace("SW 792,110 800,180 815,290")} fill="none" stroke="#fbe6a8" strokeWidth="5" />
    <Road list={ferryDashed} color="#72a5c1" width={2} dash="8 5" />
    <Road list={ferrySolid} color="#72a5c1" width={2} />
    <Road list={blocks} color="#ffffff" width={3} />
    <Road list={streets} color="#ffffff" width={5} />
    <Road list={yellow} color="#fbc850" width={10} />
    <Road list={yellow} color="#fde0a2" width={5} />
    <Road list={orange} color="#fdb78c" width={15} />
    <Road list={orange} color="#ffd0b2" width={9.5} />
    <Interstate x={3072} y={842} w={74} h={45} />
    <Interstate x={3384} y={1348} w={46} h={46} />
    <g fill="#fff" fontWeight="700" textAnchor="middle" fontSize="24">
      <text x="3109" y="876" fontSize="25" textLength="40">580</text>
      <text x="3407" y="1382">80</text>
    </g>
    <path
      d="M2882 1355Q2890 1360 2899 1354Q2907 1358 2915 1354Q2924 1360 2931 1355L2937 1362Q2931 1371 2936 1379Q2936 1391 2922 1392Q2912 1393 2907 1398Q2901 1393 2891 1392Q2877 1391 2877 1379Q2882 1371 2876 1362Z"
      fill="#fff"
      stroke="#3a3a3a"
      strokeWidth="3.5"
    />
    <text x="2907" y="1384" fontSize="24" fontWeight="700" textAnchor="middle" fill="#333">
      101
    </text>
    <circle cx="2921" cy="2203" r="21" fill="#609c6e" stroke="#fff" strokeWidth="2" />
    <path d="M2921 2188L2928 2199L2926 2199L2931 2208L2928 2208L2932 2214H2923V2219H2919V2214H2910L2914 2208L2911 2208L2916 2199L2914 2199Z" fill="#fff" />
    {dots.map(([x, y]) => (
      <rect key={x + "-" + y} x={x - 3} y={y - 3} width="6" height="6" fill="#10436d" stroke="#fff" strokeOpacity=".6" />
    ))}
    {places.map(([name, x, y, len, size, weight, color]) => (
      <text
        key={name}
        x={x}
        y={y}
        textLength={len}
        fontSize={size}
        fontWeight={weight}
        fill={color}
        stroke="rgba(255,255,255,.75)"
        strokeWidth="5"
        strokeLinejoin="round"
        paintOrder="stroke"
      >
        {name}
      </text>
    ))}
    <rect x="3543" y="2294" width="25" height="25" fill="#f35022" />
    <rect x="3570" y="2294" width="25" height="25" fill="#80ba01" />
    <rect x="3543" y="2322" width="25" height="25" fill="#02a4ef" />
    <rect x="3570" y="2322" width="25" height="25" fill="#ffb902" />
    <text x="3607" y="2336" fontSize="43" fontWeight="600" fill="#aba8a9" textLength="177" lengthAdjust="spacingAndGlyphs">
      Microsoft
    </text>
    <path d="M3800 2384Q3802 2379 3809 2380" fill="none" stroke="#333" strokeWidth="3" />
    <g fontFamily='"Liberation Sans", sans-serif' fontSize="26" fill="#000">
      <text x="3391" y="2380" textLength="189">©2020 TomTom</text>
      <text x="3592" y="2380" textLength="205">Improve this map</text>
    </g>
  </svg>
);

/* ---------- page ---------- */

const Dots = () => (
  <svg width="22" height="34" viewBox="0 0 22 34" fill="#0a8080">
    {[1, 14, 27].map((y) =>
      [3, 14].map((x) => <rect key={x + "," + y} x={x} y={y} width="6" height="6" rx="1" />)
    )}
  </svg>
);

const rows = [
  { name: "Marketing", depth: 0, open: true },
  { name: "test1_ChildA", depth: 1, open: true },
  { name: "Michael", depth: 2, open: false, device: true },
  { name: "test2", depth: 0, open: true },
  { name: "Group3453534", depth: 1, open: false },
  { name: "Basic", depth: 0, open: false },
];

export default function App() {
  return (
    <>
      <Global />
      <Screen>
        <TopTabs>
          <Tab $width={469} $height={108} $active $fill={tint}>Groups and Devices</Tab>
          <Tab $width={394} $height={105}>All Devices</Tab>
          <Tab $width={286} $height={105}>All Policies</Tab>
        </TopTabs>
        <CreateButton>+ CREATE GROUP</CreateButton>
        <Panel>
          <Sidebar>
            <SearchBox>
              <MdSearch size={54} />
              <SearchText>Search...</SearchText>
            </SearchBox>
            <Grid>
              <GridRow $head>
                <HandleCell />
                <TreeCell $depth={0}>Groups and Devices</TreeCell>
              </GridRow>
              {rows.map((r) => (
                <GridRow key={r.name}>
                  <HandleCell><Dots /></HandleCell>
                  <TreeCell $depth={r.depth} $device={r.device}>
                    <Caret $on={r.open} />
                    <Bars $short={r.device}><b /></Bars>
                    {r.device && <PhoneMark><BsPhone size={38} /></PhoneMark>}
                    {r.name}
                  </TreeCell>
                </GridRow>
              ))}
              <GridRow $fill><HandleCell /></GridRow>
              <DropGuide />
              <RowHighlight />
            </Grid>
          </Sidebar>
          <DevicePane>
            <DeviceHeader>
              <Avatar><BsPhone size={167} /></Avatar>
              <DeviceTitle>
                <TitleName>Michael</TitleName>
                <TitleId>30eb790aacc756c4</TitleId>
              </DeviceTitle>
            </DeviceHeader>
            <DeviceTabs>
              <Tab $width={265} $height={108} $active $fill="#fff">Overview</Tab>
              <Tab $width={330} $height={105}>Graphs</Tab>
              <Tab $width={355} $height={105}>Device Details</Tab>
            </DeviceTabs>
            <Card>
              <Details>
                <Line>
                  <Label>Friendly Name</Label>
                  <SmallId>30eb790aacc756c4</SmallId>
                </Line>
                <FriendlyName>Michael <MdEdit size={37} color="#09b1fb" /></FriendlyName>
                <Buttons>
                  <QrButton><BsQrCodeScan size={43} />Device QR Code</QrButton>
                  <OpsButton>
                    <Tiles><i /><i /><i /><i /></Tiles>
                    Device Operations
                    <OpsCaret />
                  </OpsButton>
                </Buttons>
                <Rule />
                <Columns $cols={2} $gap={48}>
                  <Label>Serial Number</Label>
                  <Label>IMEI</Label>
                </Columns>
                <Columns $cols={2} $gap={3}>
                  <Value>38021JEHN09570</Value>
                  <Value>354977437646988</Value>
                </Columns>
                <Space $h={39} />
                <Rule />
                <SectionHead $gap={34}><BsInfoSquare size={42} />Device Specifications</SectionHead>
                <Columns $cols={3} $gap={23}>
                  <Label>OS Version</Label>
                  <Label>Model</Label>
                  <Label>Internal Storage</Label>
                </Columns>
                <Columns $cols={3}>
                  <Value>Android 14</Value>
                  <Value>Google Pixel 7a</Value>
                  <Value>0.92 GB</Value>
                </Columns>
                <Space $h={41} />
                <Rule />
                <SectionHead $gap={35}><BsFileText size={42} />Policy</SectionHead>
                <Columns $cols={3} $gap={19}>
                  <Label>Policy Compliance</Label>
                  <Label>Applied Policy</Label>
                  <Label>Policy Sync Time</Label>
                </Columns>
                <Columns $cols={3} $gap={4}>
                  <Value><BsCheckCircleFill size={42} color="#2ecc71" />Compliant</Value>
                  <Value $link>test1_ChildA</Value>
                  <Value>{"9/19/2024,\n5:52:44 AM"}</Value>
                </Columns>
                <Space $h={38} />
                <Rule />
                <SectionHead $gap={35}><BsShieldLock size={42} />Compliance and Enrollment</SectionHead>
                <Columns $cols={3} $gap={22}>
                  <Label>Device Compliance</Label>
                  <Label>Last Reported</Label>
                  <Label>Enrollment Time</Label>
                </Columns>
                <Columns $cols={3} $gap={1}>
                  <Value><BsCheckCircleFill size={42} color="#2ecc71" />Compliant</Value>
                  <Value>6 day(s) ago</Value>
                  <Value>{"9/3/2024,\n11:14:26 AM"}</Value>
                </Columns>
              </Details>
              <MapBox>
                <MapView />
                <ZoomBox>
                  <ZoomButton aria-label="Zoom in">
                    <svg width="30" height="30"><path d="M15 0V30M0 15H30" stroke="#76797c" strokeWidth="4.5" /></svg>
                  </ZoomButton>
                  <ZoomButton aria-label="Zoom out">
                    <svg width="30" height="30"><path d="M0 15H30" stroke="#76797c" strokeWidth="4.5" /></svg>
                  </ZoomButton>
                </ZoomBox>
              </MapBox>
            </Card>
          </DevicePane>
        </Panel>
      </Screen>
    </>
  );
}
